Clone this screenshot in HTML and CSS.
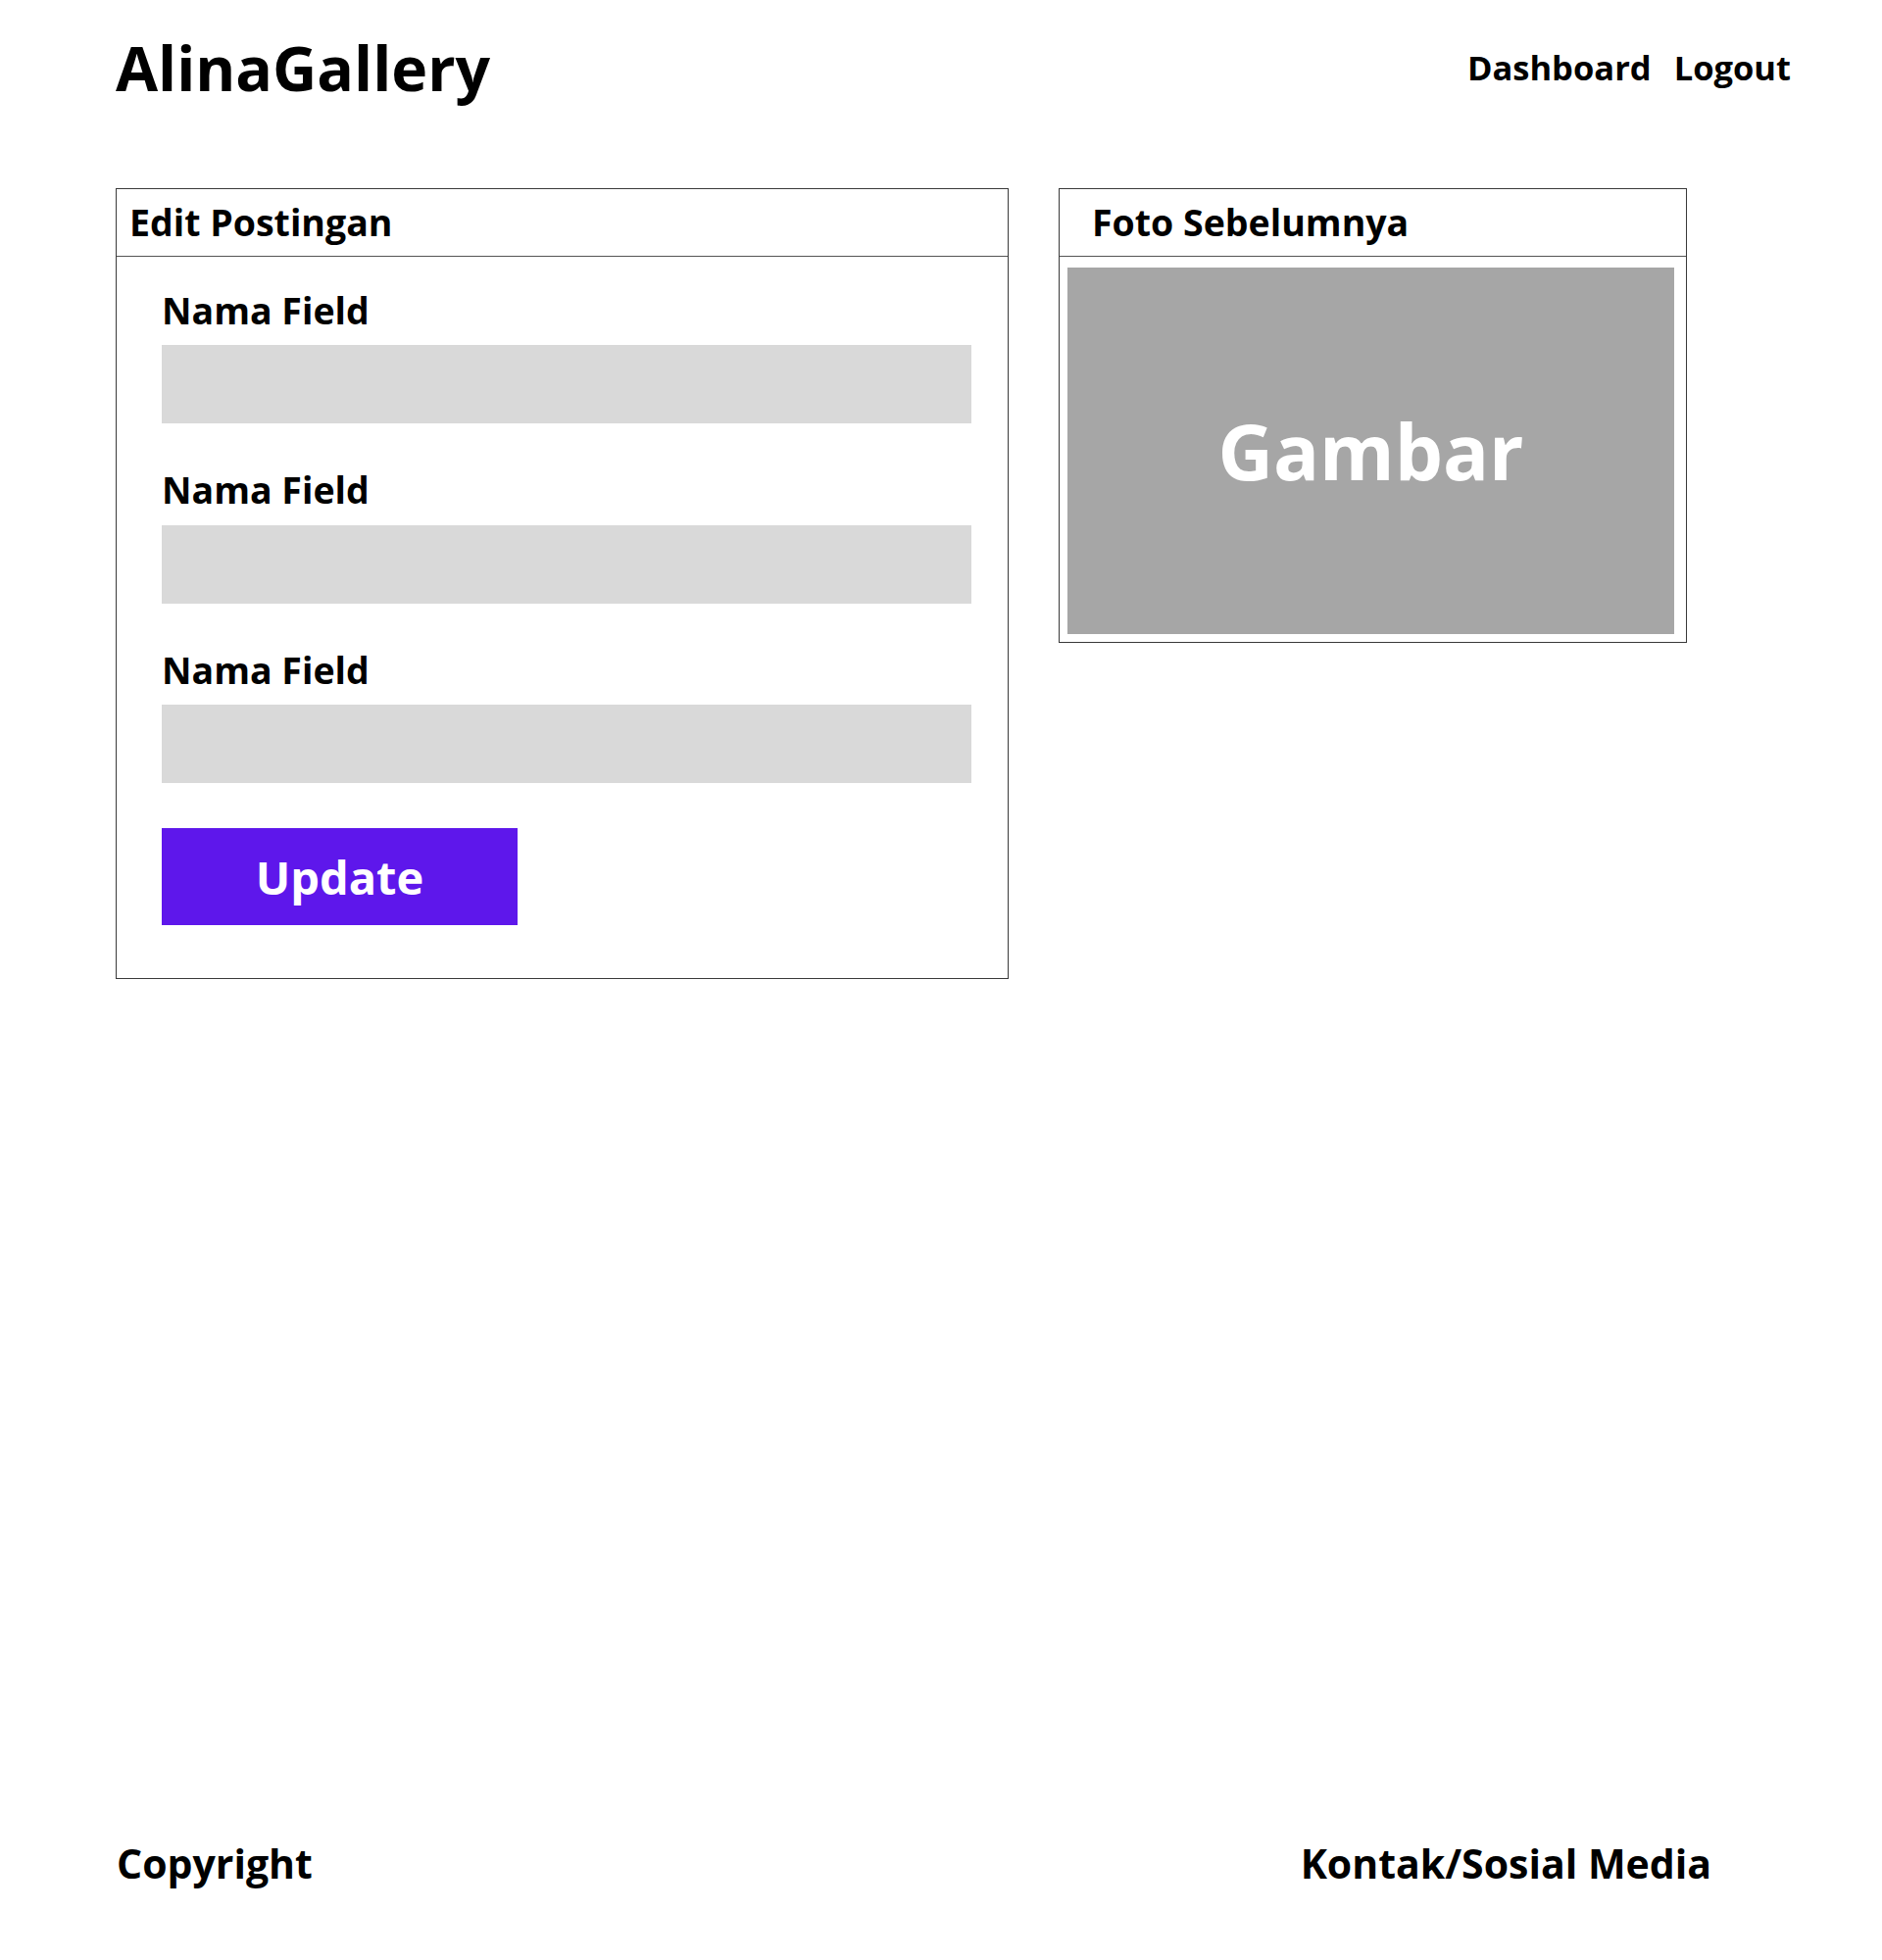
FILE: index.html
```html
<!DOCTYPE html>
<html lang="id">
<head>
<meta charset="utf-8">
<title>AlinaGallery - Edit Postingan</title>
<link rel="stylesheet" href="styles.css">
</head>
<body>
<div class="page">
  <header class="topbar">
    <div class="brand">AlinaGallery</div>
    <nav class="nav">
      <a class="nav-link" href="#">Dashboard</a>
      <a class="nav-link" href="#">Logout</a>
    </nav>
  </header>

  <main class="content">
    <section class="panel panel-edit">
      <div class="panel-head panel-head-edit">Edit Postingan</div>
      <form class="panel-body form">
        <div class="field">
          <label class="field-label">Nama Field</label>
          <div class="field-input"></div>
        </div>
        <div class="field">
          <label class="field-label">Nama Field</label>
          <div class="field-input"></div>
        </div>
        <div class="field">
          <label class="field-label">Nama Field</label>
          <div class="field-input"></div>
        </div>
        <div class="btn-update">Update</div>
      </form>
    </section>

    <section class="panel panel-photo">
      <div class="panel-head panel-head-photo">Foto Sebelumnya</div>
      <div class="photo-body">
        <div class="photo">Gambar</div>
      </div>
    </section>
  </main>

  <footer class="footer">
    <div class="footer-left">Copyright</div>
    <div class="footer-right">Kontak/Sosial Media</div>
  </footer>
</div>
</body>
</html>
```

FILE: styles.css
```css
* { box-sizing: border-box; }

html, body {
  margin: 0;
  padding: 0;
  background: #ffffff;
}

body {
  font-family: "Open Sans", "Liberation Sans", sans-serif;
  font-weight: 700;
  color: #000000;
}

.page {
  width: 1920px;
  height: 2000px;
  display: flex;
  flex-direction: column;
}

/* Header */
.topbar {
  display: flex;
  justify-content: space-between;
  align-items: flex-start;
  padding: 38px 93px 0 118px;
}

.brand {
  font-size: 62.5px;
  line-height: 1;
}

.nav {
  display: flex;
  gap: 23px;
  margin-top: 14px;
}

.nav-link {
  font-size: 34.5px;
  line-height: 1;
  color: #000000;
  text-decoration: none;
}

/* Main content */
.content {
  display: flex;
  align-items: flex-start;
  gap: 51px;
  padding: 91px 0 0 118px;
}

.panel {
  border: 1px solid #3a3a3a;
  background: #ffffff;
}

.panel-edit { width: 911px; }
.panel-photo { width: 641px; }

.panel-head {
  height: 69px;
  border-bottom: 1px solid #555555;
  font-size: 37.5px;
  line-height: 68px;
  white-space: nowrap;
}

.panel-head-edit { padding-left: 13px; }
.panel-head-photo { padding-left: 33px; }

/* Form */
.form {
  display: flex;
  flex-direction: column;
  align-items: flex-start;
  padding: 36px 37px 54px 46px;
}

.field {
  align-self: stretch;
  display: flex;
  flex-direction: column;
  gap: 17px;
}

.field + .field { margin-top: 49px; }

.field-label {
  font-size: 37.5px;
  line-height: 1;
}

.field-input {
  height: 80px;
  background: #d9d9d9;
}

.btn-update {
  margin-top: 46px;
  width: 363px;
  height: 99px;
  background: #5e17eb;
  color: #ffffff;
  font-size: 47px;
  display: flex;
  align-items: center;
  justify-content: center;
}

/* Photo */
.photo-body {
  padding: 11px 12px 8px 8px;
}

.photo {
  height: 374px;
  background: #a6a6a6;
  color: #ffffff;
  font-size: 78px;
  display: flex;
  align-items: center;
  justify-content: center;
}

/* Footer */
.footer {
  margin-top: auto;
  display: flex;
  justify-content: space-between;
  padding: 0 174px 78px 119px;
}

.footer-left,
.footer-right {
  font-size: 41px;
  line-height: 1;
}
```
